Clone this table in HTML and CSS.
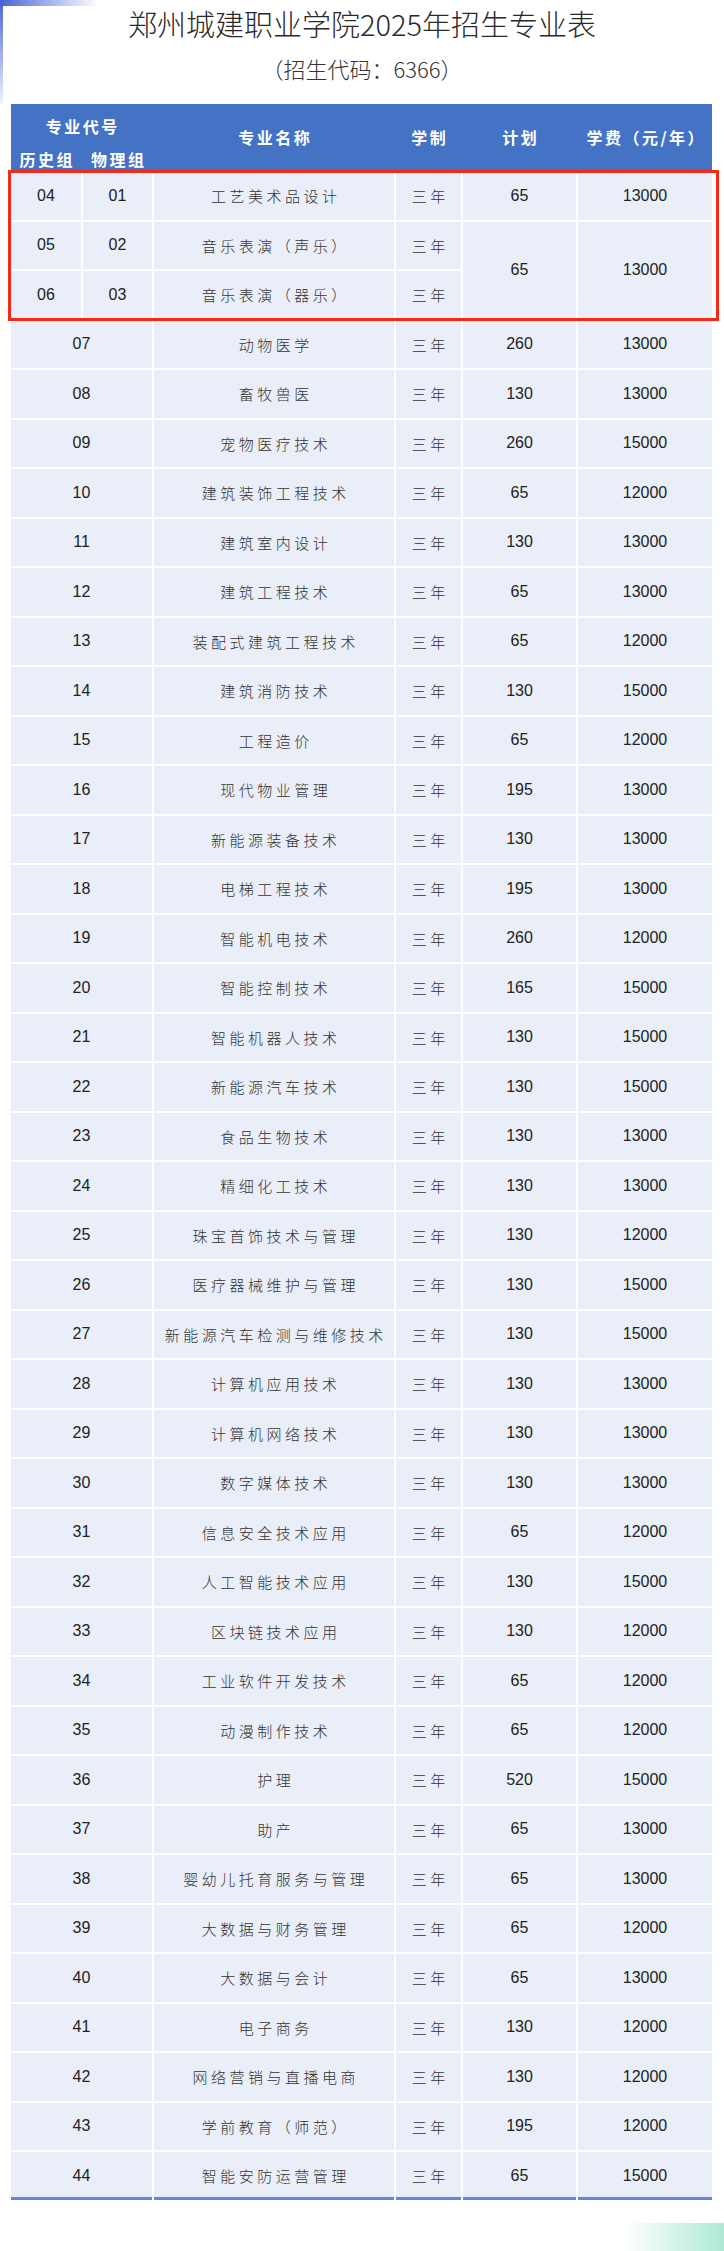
FILE: index.html
```html
<!DOCTYPE html>
<html lang="zh-CN">
<head>
<meta charset="utf-8">
<title>郑州城建职业学院2025年招生专业表</title>
<link rel="stylesheet" href="styles.css">
</head>
<body>
<div class="deco-top"></div>
<div class="deco-left"></div>

<header class="titles">
  <h1 class="title">郑州城建职业学院2025年招生专业表</h1>
  <p class="subtitle">（招生代码：6366）</p>
</header>

<main class="sheet">
  <div class="thead">
    <div class="th th-code">专业代号</div>
    <div class="th th-hist">历史组</div>
    <div class="th th-phys">物理组</div>
    <div class="th th-name">专业名称</div>
    <div class="th th-dur">学制</div>
    <div class="th th-plan">计划</div>
    <div class="th th-fee">学费（元/年）</div>
  </div>

  <div class="tbody">
    <div class="highlight"></div>

    <div class="c num">04</div><div class="c num">01</div><div class="c name">工艺美术品设计</div><div class="c name">三年</div><div class="c num">65</div><div class="c num">13000</div>
    <div class="c num">05</div><div class="c num">02</div><div class="c name">音乐表演（声乐）</div><div class="c name">三年</div><div class="c num tall">65</div><div class="c num tall">13000</div>
    <div class="c num">06</div><div class="c num">03</div><div class="c name">音乐表演（器乐）</div><div class="c name">三年</div>

    <div class="c num wide">07</div><div class="c name">动物医学</div><div class="c name">三年</div><div class="c num">260</div><div class="c num">13000</div>
    <div class="c num wide">08</div><div class="c name">畜牧兽医</div><div class="c name">三年</div><div class="c num">130</div><div class="c num">13000</div>
    <div class="c num wide">09</div><div class="c name">宠物医疗技术</div><div class="c name">三年</div><div class="c num">260</div><div class="c num">15000</div>
    <div class="c num wide">10</div><div class="c name">建筑装饰工程技术</div><div class="c name">三年</div><div class="c num">65</div><div class="c num">12000</div>
    <div class="c num wide">11</div><div class="c name">建筑室内设计</div><div class="c name">三年</div><div class="c num">130</div><div class="c num">13000</div>
    <div class="c num wide">12</div><div class="c name">建筑工程技术</div><div class="c name">三年</div><div class="c num">65</div><div class="c num">13000</div>
    <div class="c num wide">13</div><div class="c name">装配式建筑工程技术</div><div class="c name">三年</div><div class="c num">65</div><div class="c num">12000</div>
    <div class="c num wide">14</div><div class="c name">建筑消防技术</div><div class="c name">三年</div><div class="c num">130</div><div class="c num">15000</div>
    <div class="c num wide">15</div><div class="c name">工程造价</div><div class="c name">三年</div><div class="c num">65</div><div class="c num">12000</div>
    <div class="c num wide">16</div><div class="c name">现代物业管理</div><div class="c name">三年</div><div class="c num">195</div><div class="c num">13000</div>
    <div class="c num wide">17</div><div class="c name">新能源装备技术</div><div class="c name">三年</div><div class="c num">130</div><div class="c num">13000</div>
    <div class="c num wide">18</div><div class="c name">电梯工程技术</div><div class="c name">三年</div><div class="c num">195</div><div class="c num">13000</div>
    <div class="c num wide">19</div><div class="c name">智能机电技术</div><div class="c name">三年</div><div class="c num">260</div><div class="c num">12000</div>
    <div class="c num wide">20</div><div class="c name">智能控制技术</div><div class="c name">三年</div><div class="c num">165</div><div class="c num">15000</div>
    <div class="c num wide">21</div><div class="c name">智能机器人技术</div><div class="c name">三年</div><div class="c num">130</div><div class="c num">15000</div>
    <div class="c num wide">22</div><div class="c name">新能源汽车技术</div><div class="c name">三年</div><div class="c num">130</div><div class="c num">15000</div>
    <div class="c num wide">23</div><div class="c name">食品生物技术</div><div class="c name">三年</div><div class="c num">130</div><div class="c num">13000</div>
    <div class="c num wide">24</div><div class="c name">精细化工技术</div><div class="c name">三年</div><div class="c num">130</div><div class="c num">13000</div>
    <div class="c num wide">25</div><div class="c name">珠宝首饰技术与管理</div><div class="c name">三年</div><div class="c num">130</div><div class="c num">12000</div>
    <div class="c num wide">26</div><div class="c name">医疗器械维护与管理</div><div class="c name">三年</div><div class="c num">130</div><div class="c num">15000</div>
    <div class="c num wide">27</div><div class="c name">新能源汽车检测与维修技术</div><div class="c name">三年</div><div class="c num">130</div><div class="c num">15000</div>
    <div class="c num wide">28</div><div class="c name">计算机应用技术</div><div class="c name">三年</div><div class="c num">130</div><div class="c num">13000</div>
    <div class="c num wide">29</div><div class="c name">计算机网络技术</div><div class="c name">三年</div><div class="c num">130</div><div class="c num">13000</div>
    <div class="c num wide">30</div><div class="c name">数字媒体技术</div><div class="c name">三年</div><div class="c num">130</div><div class="c num">13000</div>
    <div class="c num wide">31</div><div class="c name">信息安全技术应用</div><div class="c name">三年</div><div class="c num">65</div><div class="c num">12000</div>
    <div class="c num wide">32</div><div class="c name">人工智能技术应用</div><div class="c name">三年</div><div class="c num">130</div><div class="c num">15000</div>
    <div class="c num wide">33</div><div class="c name">区块链技术应用</div><div class="c name">三年</div><div class="c num">130</div><div class="c num">12000</div>
    <div class="c num wide">34</div><div class="c name">工业软件开发技术</div><div class="c name">三年</div><div class="c num">65</div><div class="c num">12000</div>
    <div class="c num wide">35</div><div class="c name">动漫制作技术</div><div class="c name">三年</div><div class="c num">65</div><div class="c num">12000</div>
    <div class="c num wide">36</div><div class="c name">护理</div><div class="c name">三年</div><div class="c num">520</div><div class="c num">15000</div>
    <div class="c num wide">37</div><div class="c name">助产</div><div class="c name">三年</div><div class="c num">65</div><div class="c num">13000</div>
    <div class="c num wide">38</div><div class="c name">婴幼儿托育服务与管理</div><div class="c name">三年</div><div class="c num">65</div><div class="c num">13000</div>
    <div class="c num wide">39</div><div class="c name">大数据与财务管理</div><div class="c name">三年</div><div class="c num">65</div><div class="c num">12000</div>
    <div class="c num wide">40</div><div class="c name">大数据与会计</div><div class="c name">三年</div><div class="c num">65</div><div class="c num">13000</div>
    <div class="c num wide">41</div><div class="c name">电子商务</div><div class="c name">三年</div><div class="c num">130</div><div class="c num">12000</div>
    <div class="c num wide">42</div><div class="c name">网络营销与直播电商</div><div class="c name">三年</div><div class="c num">130</div><div class="c num">12000</div>
    <div class="c num wide">43</div><div class="c name">学前教育（师范）</div><div class="c name">三年</div><div class="c num">195</div><div class="c num">12000</div>
    <div class="c num wide last">44</div><div class="c name last">智能安防运营管理</div><div class="c name last">三年</div><div class="c num last">65</div><div class="c num last">15000</div>
  </div>
</main>

<div class="corner-glow"></div>
</body>
</html>
```

FILE: styles.css
```css
html, body {
  margin: 0;
  padding: 0;
}

body {
  position: relative;
  width: 724px;
  height: 2251px;
  overflow: hidden;
  background: #ffffff;
  font-family: "Liberation Sans", "Noto Sans CJK SC", sans-serif;
  color: #222;
}

/* decorative page chrome */
.deco-top {
  position: absolute;
  left: 0;
  top: 0;
  width: 98px;
  height: 6px;
  background: linear-gradient(to right, #4a63d6, rgba(255, 255, 255, 0));
}

.deco-left {
  position: absolute;
  left: 0;
  top: 0;
  width: 3px;
  height: 104px;
  background: linear-gradient(to bottom, #4a63d6, rgba(210, 218, 246, 0.3));
}

.corner-glow {
  position: absolute;
  left: 623px;
  top: 2223px;
  width: 101px;
  height: 28px;
  background: linear-gradient(to right, rgba(255, 255, 255, 0), #aee9d4);
}

/* titles */
.titles {
  padding-top: 5px;
  text-align: center;
}

.title {
  margin: 0;
  font-family: "Noto Sans CJK SC", sans-serif;
  font-weight: 300;
  font-size: 29px;
  line-height: 37px;
  color: #2a2a2a;
}

.subtitle {
  margin: 11px 0 0;
  font-family: "Noto Sans CJK SC", sans-serif;
  font-weight: 300;
  font-size: 22px;
  line-height: 30px;
  color: #333;
}

/* table */
.sheet {
  display: block;
  width: 701px;
  margin: 21px 0 0 11px;
}

.thead,
.tbody {
  display: grid;
  grid-template-columns: 70px 69px 240px 65px 113px 134px;
  column-gap: 2px;
}

.thead {
  grid-template-rows: 44px 22px;
  background: #4472c4;
  color: #ffffff;
}

.th {
  display: flex;
  align-items: center;
  justify-content: center;
  font-family: "Noto Sans CJK SC", sans-serif;
  font-weight: 700;
  font-size: 16px;
  letter-spacing: 2.5px;
  padding-left: 2.5px;
  white-space: nowrap;
}

.th-code { grid-column: 1 / 3; grid-row: 1; }
.th-hist { grid-column: 1; grid-row: 2; }
.th-phys { grid-column: 2; grid-row: 2; }
.th-name { grid-column: 3; grid-row: 1 / 3; }
.th-dur  { grid-column: 4; grid-row: 1 / 3; }
.th-plan { grid-column: 5; grid-row: 1 / 3; }
.th-fee  { grid-column: 6; grid-row: 1 / 3; }

.tbody {
  position: relative;
  margin-top: 2px;
  grid-auto-rows: 47.5px;
  row-gap: 2px;
}

.c {
  display: flex;
  align-items: center;
  justify-content: center;
  background: #e9eef8;
  white-space: nowrap;
}

.num {
  font-family: "Liberation Sans", sans-serif;
  font-size: 16px;
  color: #222;
}

.name {
  font-family: "Noto Sans CJK SC", sans-serif;
  font-weight: 300;
  font-size: 15px;
  letter-spacing: 3.5px;
  padding-left: 3.5px;
  color: #333;
}

.wide {
  grid-column: span 2;
}

.tall {
  grid-row: span 2;
}

.last {
  box-shadow: inset 0 -3px 0 #6389d6;
}

.highlight {
  position: absolute;
  left: -3px;
  top: -2px;
  width: 711px;
  height: 151px;
  box-sizing: border-box;
  border: 3px solid #f42a17;
  pointer-events: none;
  z-index: 2;
}
```
